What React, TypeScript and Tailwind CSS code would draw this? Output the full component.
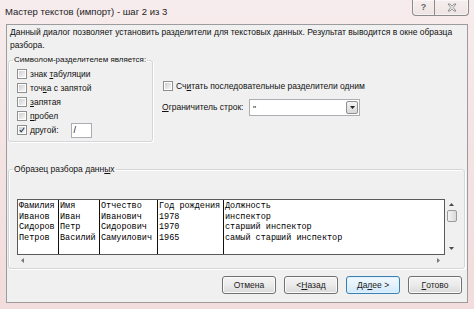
import React from "react";

function Check({ checked }: { checked?: boolean }) {
  return (
    <span className="inline-flex w-[10px] h-[10px] shrink-0 border border-[#8e8f8f] bg-white p-[1px]">
      <span className="flex w-full h-full items-center justify-center bg-linear-to-br from-[#cfcfcf] to-[#f7f7f7]">
        {checked && (
          <svg width="8" height="8" viewBox="0 0 8 8" className="block">
            <path d="M1 4 L3 6.5 L7 1" fill="none" stroke="#2f3d5c" strokeWidth="1.5" />
          </svg>
        )}
      </span>
    </span>
  );
}

function U({ children }: { children: React.ReactNode }) {
  return <span className="underline underline-offset-[1px]">{children}</span>;
}

function Btn({ children, primary }: { children: React.ReactNode; primary?: boolean }) {
  return (
    <div
      className={
        "flex items-center justify-center w-[54px] h-[18px] rounded-[3px] border text-[8.5px] text-[#1a1a1a] " +
        (primary
          ? "border-[#3c7fb1] bg-linear-to-b from-[#f1f9fe] via-[#e3f2fc] to-[#cfe9fb] shadow-[inset_0_0_0_1px_#dff1fc]"
          : "border-[#707070] bg-linear-to-b from-[#f4f4f4] via-[#ebebeb] to-[#d9d9d9] shadow-[inset_0_0_0_1px_#fbfbfb]")
      }
    >
      {children}
    </div>
  );
}

const rows = [
  ["Фамилия", "Имя", "Отчество", "Год рождения", "Должность"],
  ["Иванов", "Иван", "Иванович", "1978", "инспектор"],
  ["Сидоров", "Петр", "Сидорович", "1970", "старший инспектор"],
  ["Петров", "Василий", "Самуилович", "1965", "самый старший инспектор"],
];

const colW = ["w-[41px]", "w-[41px]", "w-[58px]", "w-[66px]", "flex-1"];

export default function App() {
  return (
    <div className="w-[474px] h-[309px] overflow-hidden bg-linear-to-b from-[#f7eced] via-[#f4e3e3] to-[#f2dcdc] font-['Liberation_Sans',Arial,sans-serif] text-[#111]">
      {/* Title bar */}
      <div className="flex h-[24px]">
        <div className="pl-[5px] pt-[6px] text-[9.5px] text-[#1c1c1c] leading-[12px] whitespace-nowrap">
          Мастер текстов (импорт) - шаг 2 из 3
        </div>
        <div className="ml-auto mr-[5px] flex h-[16px] border border-t-0 border-[#8c8c8c] rounded-b-[4px] bg-linear-to-b from-[#f6eeee] to-[#efe4e4] shadow-[inset_0_0_0_1px_#ffffff80]">
          <div className="w-[22px] flex items-center justify-center border-r border-[#8c8c8c] text-[9px] text-[#666] font-bold">
            ?
          </div>
          <div className="w-[33px] flex items-center justify-center">
            <svg width="10" height="9" viewBox="0 0 10 9">
              <path
                d="M1 1 L3 1 L5 3.2 L7 1 L9 1 L6.2 4.5 L9 8 L7 8 L5 5.8 L3 8 L1 8 L3.8 4.5 Z"
                fill="#f8f8f8"
                stroke="#777"
                strokeWidth="0.8"
              />
            </svg>
          </div>
        </div>
      </div>

      {/* Client area */}
      <div className="mx-[6px] h-[279px] border border-[#9c9c9c] bg-[#f0f0f0] pl-[1px] pr-[2px] flex flex-col">
        <div className="ml-[2px] mt-[1px] text-[8.5px] leading-[13px] text-[#111] whitespace-nowrap">
          Данный диалог позволяет установить разделители для текстовых данных. Результат выводится в окне образца
          <br />
          разбора.
        </div>

        <div className="flex mt-[2px] h-[88px]">
          <fieldset className="min-w-0 w-[145px] h-[88px] shrink-0 border border-[#d3d7da] rounded-[3px] shadow-[inset_1px_1px_0_#fff,1px_1px_0_#fff]">
            <legend className="ml-[4px] px-[1px] text-[8px] leading-[12px] whitespace-nowrap">
              Символом-разделителем является:
            </legend>
            <div className="flex flex-col pt-[1px] pl-[8px] text-[8.5px] whitespace-nowrap">
              <div className="flex items-center h-[14px] gap-[3px]">
                <Check />
                <span>
                  знак <U>т</U>абуляции
                </span>
              </div>
              <div className="flex items-center h-[14px] gap-[3px]">
                <Check />
                <span>
                  точ<U>к</U>а с запятой
                </span>
              </div>
              <div className="flex items-center h-[14px] gap-[3px]">
                <Check />
                <span>
                  <U>з</U>апятая
                </span>
              </div>
              <div className="flex items-center h-[14px] gap-[3px]">
                <Check />
                <span>
                  <U>п</U>робел
                </span>
              </div>
              <div className="flex items-center h-[14px] gap-[3px]">
                <Check checked />
                <span>
                  <U>д</U>ругой:
                </span>
                <div className="ml-[9px] w-[21px] h-[15px] border border-[#abadb3] bg-white text-[9px] leading-[13px] pl-[2px]">
                  /
                </div>
              </div>
            </div>
          </fieldset>

          <div className="ml-[9px] flex flex-col text-[8.5px] whitespace-nowrap">
            <div className="mt-[26px] flex items-center h-[12px] gap-[3px] ml-[1px]">
              <Check />
              <span>
                Сч<U>и</U>тать последовательные разделители одним
              </span>
            </div>
            <div className="mt-[7px] flex items-center h-[17px]">
              <span className="w-[87px]">
                <U>О</U>граничитель строк:
              </span>
              <div className="w-[111px] h-[17px] border border-[#abadb3] bg-white flex items-center pl-[3px] pr-[1px]">
                <span className="flex-1 leading-[10px] pt-[2px]">"</span>
                <div className="w-[12px] h-[13px] border border-[#8f8f8f] rounded-[2px] bg-linear-to-b from-[#f4f4f4] to-[#d8d8d8] flex items-center justify-center">
                  <svg width="5" height="3" viewBox="0 0 5 3">
                    <path d="M0 0 L5 0 L2.5 3 Z" fill="#222" />
                  </svg>
                </div>
              </div>
            </div>
          </div>
        </div>

        <fieldset className="min-w-0 mt-[21px] w-[457px] h-[106px] border border-[#d3d7da] rounded-[3px] shadow-[inset_1px_1px_0_#fff,1px_1px_0_#fff]">
          <legend className="ml-[4px] px-[1px] text-[8.5px] leading-[12px] whitespace-nowrap">
            Образец разбора данн<U>ы</U>х
          </legend>
          <div className="ml-[8px] mt-[24px] w-[441px] h-[67px] flex flex-col">
            <div className="flex h-[56px]">
              <div className="w-[428px] h-[56px] border border-[#5a5a5a] bg-white flex overflow-hidden font-['Liberation_Mono','Courier_New',monospace] text-[8.5px] leading-[10.7px] text-black">
                {colW.map((w, ci) => (
                  <div
                    key={ci}
                    className={w + " h-full pt-[1px] pl-[1px] whitespace-nowrap " + (ci < 4 ? "border-r border-[#111]" : "")}
                  >
                    {rows.map((r, ri) => (
                      <div key={ri}>{r[ci]}</div>
                    ))}
                  </div>
                ))}
              </div>
              <div className="w-[13px] h-[56px] flex flex-col items-center">
                <svg width="5" height="3" viewBox="0 0 5 3" className="mt-[4px]">
                  <path d="M0 3 L5 3 L2.5 0 Z" fill="#4a4a4a" />
                </svg>
                <div className="mt-[4px] w-[10px] h-[12px] rounded-[2px] border border-[#9a9a9a] bg-linear-to-r from-[#f4f4f4] to-[#dadada]" />
                <svg width="5" height="3" viewBox="0 0 5 3" className="mt-auto mb-[5px]">
                  <path d="M0 0 L5 0 L2.5 3 Z" fill="#4a4a4a" />
                </svg>
              </div>
            </div>
            <div className="w-[428px] h-[11px] flex items-center px-[4px]">
              <svg width="3" height="5" viewBox="0 0 3 5">
                <path d="M3 0 L3 5 L0 2.5 Z" fill="#777" />
              </svg>
              <svg width="3" height="5" viewBox="0 0 3 5" className="ml-auto mr-[1px]">
                <path d="M0 0 L0 5 L3 2.5 Z" fill="#777" />
              </svg>
            </div>
          </div>
        </fieldset>

        <div className="mt-[7px] flex justify-end gap-[8px] pr-[3px]">
          <Btn>Отмена</Btn>
          <Btn>
            &lt; <U>Н</U>азад
          </Btn>
          <Btn primary>
            Да<U>л</U>ее &gt;
          </Btn>
          <Btn>
            <U>Г</U>отово
          </Btn>
        </div>
      </div>
    </div>
  );
}
